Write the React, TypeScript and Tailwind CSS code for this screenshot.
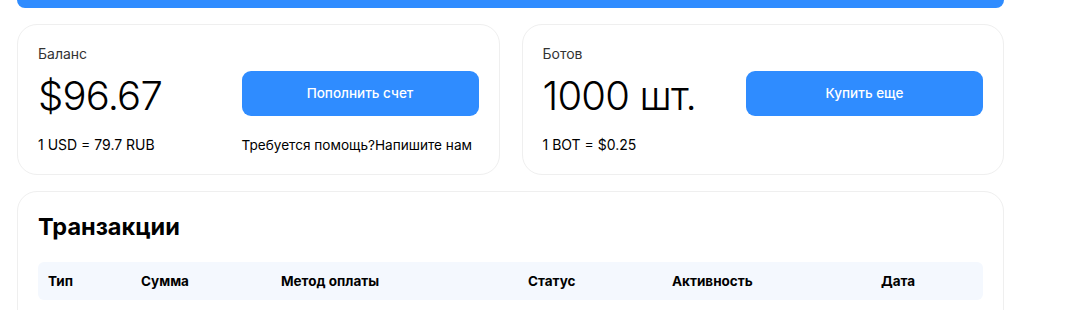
const columns = ["Тип", "Сумма", "Метод оплаты", "Статус", "Активность", "Дата"];

interface StatCardProps {
  label: string;
  value: string;
  note: string;
  action: string;
  help?: string;
}

function StatCard({ label, value, note, action, help }: StatCardProps) {
  return (
    <div className="h-[151px] rounded-[20px] border border-[#efefef] bg-white p-5 flex justify-between">
      <div className="flex flex-col">
        <p className="text-[14px] leading-[18px] text-[#333]">{label}</p>
        <p className="mt-[9px] text-[40px] leading-[48px] font-light tracking-[-0.8px] text-black">{value}</p>
        <p className="mt-auto text-[14px] leading-[18px] text-black">{note}</p>
      </div>
      <div className="w-[237px] flex flex-col pt-[26px]">
        <button className="h-[45px] w-full rounded-[9px] bg-[#2f8cff] text-[13.5px] font-medium text-white">
          {action}
        </button>
        {help && <p className="mt-auto text-[13.6px] leading-[18px] text-black whitespace-nowrap">{help}</p>}
      </div>
    </div>
  );
}

export default function App() {
  return (
    <main className="min-h-[310px] w-full bg-white font-['Inter',sans-serif] overflow-hidden">
      <div className="ml-[17px] w-[987px] flex flex-col">
        <div className="h-2 w-full rounded-b-2xl bg-[#2f8cff]" />
        <div className="mt-4 grid grid-cols-2 gap-[22px]">
          <StatCard
            label="Баланс"
            value="$96.67"
            note="1 USD = 79.7 RUB"
            action="Пополнить счет"
            help="Требуется помощь?Напишите нам"
          />
          <StatCard label="Ботов" value="1000 шт." note="1 BOT = $0.25" action="Купить еще" />
        </div>
        <div className="mt-4 h-[200px] rounded-[20px] border border-[#efefef] bg-white px-5 pt-5">
          <h2 className="text-[23.5px] leading-[30px] font-bold text-black">Транзакции</h2>
          <div className="mt-5 h-[38px] rounded-md bg-[#f4f8fe] px-[10px] grid grid-cols-[93px_140px_247px_144px_209px_1fr] items-center">
            {columns.map((c) => (
              <span key={c} className="text-[13.5px] font-bold text-black">
                {c}
              </span>
            ))}
          </div>
        </div>
      </div>
    </main>
  );
}
